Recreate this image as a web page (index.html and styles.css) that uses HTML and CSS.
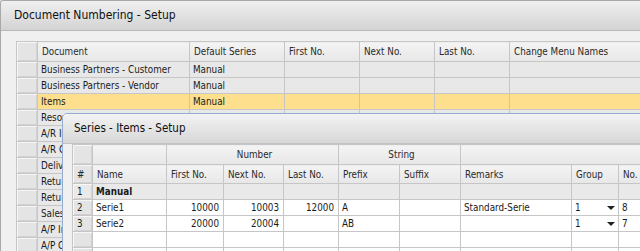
FILE: index.html
```html
<!DOCTYPE html>
<html lang="en">
<head>
  <meta charset="UTF-8">
  <title>Document Numbering - Setup</title>
  <link rel="stylesheet" href="styles.css">
</head>
<body>
  <div class="window">
    <div class="window-title">Document Numbering - Setup</div>
    <div class="window-body">
      <table class="grid main-grid">
        <colgroup>
          <col style="width: 21px">
          <col style="width: 152px">
          <col style="width: 95px">
          <col style="width: 75px">
          <col style="width: 75px">
          <col style="width: 75px">
          <col style="width: 160px">
        </colgroup>
        <thead>
          <tr>
            <th class="row-head"></th>
            <th>Document</th>
            <th>Default Series</th>
            <th>First No.</th>
            <th>Next No.</th>
            <th>Last No.</th>
            <th>Change Menu Names</th>
          </tr>
        </thead>
        <tbody>
          <tr><td class="row-head"></td><td>Business Partners - Customer</td><td>Manual</td><td></td><td></td><td></td><td></td></tr>
          <tr><td class="row-head"></td><td>Business Partners - Vendor</td><td>Manual</td><td></td><td></td><td></td><td></td></tr>
          <tr class="selected"><td class="row-head"></td><td>Items</td><td>Manual</td><td></td><td></td><td></td><td></td></tr>
          <tr><td class="row-head"></td><td>Resources</td><td>Manual</td><td></td><td></td><td></td><td></td></tr>
          <tr><td class="row-head"></td><td>A/R Invoice</td><td>Manual</td><td></td><td></td><td></td><td></td></tr>
          <tr><td class="row-head"></td><td>A/R Credit Memo</td><td>Manual</td><td></td><td></td><td></td><td></td></tr>
          <tr><td class="row-head"></td><td>Delivery</td><td>Manual</td><td></td><td></td><td></td><td></td></tr>
          <tr><td class="row-head"></td><td>Returns</td><td>Manual</td><td></td><td></td><td></td><td></td></tr>
          <tr><td class="row-head"></td><td>Return Request</td><td>Manual</td><td></td><td></td><td></td><td></td></tr>
          <tr><td class="row-head"></td><td>Sales Quotation</td><td>Manual</td><td></td><td></td><td></td><td></td></tr>
          <tr><td class="row-head"></td><td>A/P Invoice</td><td>Manual</td><td></td><td></td><td></td><td></td></tr>
          <tr><td class="row-head"></td><td>A/P Credit Memo</td><td>Manual</td><td></td><td></td><td></td><td></td></tr>
        </tbody>
      </table>
    </div>

    <div class="dialog">
      <div class="dialog-title">Series - Items - Setup</div>
      <div class="dialog-body">
        <table class="grid series-grid">
          <colgroup>
            <col style="width: 20px">
            <col style="width: 74px">
            <col style="width: 57px">
            <col style="width: 60px">
            <col style="width: 55px">
            <col style="width: 61px">
            <col style="width: 61px">
            <col style="width: 111px">
            <col style="width: 47px">
            <col style="width: 40px">
          </colgroup>
          <thead>
            <tr class="group-row">
              <th class="row-head"></th>
              <th></th>
              <th colspan="3" class="center">Number</th>
              <th colspan="2" class="center">String</th>
              <th colspan="3"></th>
            </tr>
            <tr>
              <th class="row-head">#</th>
              <th>Name</th>
              <th>First No.</th>
              <th>Next No.</th>
              <th>Last No.</th>
              <th>Prefix</th>
              <th>Suffix</th>
              <th>Remarks</th>
              <th>Group</th>
              <th>No.</th>
            </tr>
          </thead>
          <tbody>
            <tr class="locked">
              <td class="row-head">1</td><td class="bold">Manual</td><td></td><td></td><td></td><td></td><td></td><td></td><td></td><td></td>
            </tr>
            <tr>
              <td class="row-head">2</td><td>Serie1</td><td class="num">10000</td><td class="num">10003</td><td class="num">12000</td><td>A</td><td></td><td>Standard-Serie</td>
              <td><span class="combo"><span>1</span><span class="arrow"></span></span></td><td>8</td>
            </tr>
            <tr>
              <td class="row-head">3</td><td>Serie2</td><td class="num">20000</td><td class="num">20004</td><td></td><td>AB</td><td></td><td></td>
              <td><span class="combo"><span>1</span><span class="arrow"></span></span></td><td>7</td>
            </tr>
            <tr><td class="row-head"></td><td></td><td></td><td></td><td></td><td></td><td></td><td></td><td></td><td></td></tr>
            <tr><td class="row-head"></td><td></td><td></td><td></td><td></td><td></td><td></td><td></td><td></td><td></td></tr>
          </tbody>
        </table>
      </div>
    </div>
  </div>
</body>
</html>
```

FILE: styles.css
```css
* {
  box-sizing: border-box;
  margin: 0;
  padding: 0;
}

body {
  width: 640px;
  height: 251px;
  overflow: hidden;
  background: #f0f0f0;
  font-family: 'DejaVu Sans Condensed', 'DejaVu Sans', Tahoma, sans-serif;
  font-size: 9.8px;
  color: #1b1b1b;
}

.window {
  position: relative;
  width: 640px;
  height: 251px;
  overflow: hidden;
  border-left: 1px solid #a9a9a9;
  border-top: 1px solid #a9a9a9;
  border-radius: 3px 0 0 0;
  background: #f0f0f0;
}

.window-title {
  height: 30px;
  padding: 7px 0 0 13px;
  font-size: 12px;
  color: #111;
  background: linear-gradient(#f0f0f0, #d3d3d3);
  border-bottom: 1px solid #b9b9b9;
}

.window-body {
  padding: 10px 0 0 15px;
}

/* shared grid look */
.grid {
  border-collapse: collapse;
  table-layout: fixed;
}

.grid th,
.grid td {
  border: 1px solid #c6c6c6;
  padding: 0 0 0 3px;
  text-align: left;
  font-weight: normal;
  white-space: nowrap;
  overflow: hidden;
}

.grid th {
  height: 20px;
  background: linear-gradient(#f4f4f4, #e7e7e7);
  color: #2a2a2a;
  padding-left: 4px;
}

.grid td {
  height: 16px;
}

.grid .row-head {
  background: #e4e4e4;
  border-color: #c6c6c6;
  box-shadow: inset 1px 1px 0 #f7f7f7, inset -1px -1px 0 #d2d2d2;
}

.main-grid {
  width: 653px;
}

.main-grid td {
  background: #e8e8e8;
}

.main-grid tr.selected td {
  background: #fedf8e;
}

.main-grid tr.selected td.row-head {
  background: #e4e4e4;
}

/* overlay dialog */
.dialog {
  position: absolute;
  left: 61px;
  top: 112px;
  width: 600px;
  height: 160px;
  overflow: hidden;
  border: 1px solid #93abd1;
  border-radius: 5px 0 0 0;
  background: #f0f0f0;
}

.dialog-title {
  height: 30px;
  padding: 7px 0 0 11px;
  font-size: 11.5px;
  color: #111;
  background: linear-gradient(#f3f3f3, #d7d7d7);
  border-bottom: 1px solid #c2c2c2;
}

.dialog-body {
  padding: 0 0 0 9px;
}

.series-grid {
  width: 586px;
}

.series-grid .group-row th {
  height: 20px;
}

.series-grid th {
  height: 19px;
}

.series-grid th.center {
  text-align: center;
}

.series-grid td {
  background: #fff;
}

.series-grid tr.locked td {
  background: #e9e9e9;
}

.series-grid td.row-head {
  padding-left: 4px;
  background: #e4e4e4;
}

.series-grid td.num {
  text-align: right;
  padding-right: 4px;
}

.grid td.bold {
  font-weight: bold;
}

.combo {
  display: flex;
  justify-content: space-between;
  align-items: center;
  padding-right: 3px;
}

.arrow {
  width: 0;
  height: 0;
  border-left: 4px solid transparent;
  border-right: 4px solid transparent;
  border-top: 4px solid #222;
}
```
